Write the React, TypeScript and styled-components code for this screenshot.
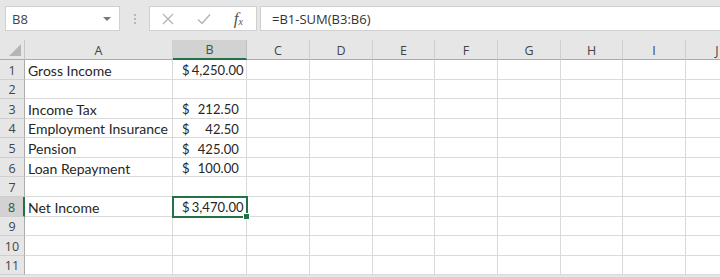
import styled, { createGlobalStyle } from "styled-components";

const GlobalStyle = createGlobalStyle`
	html, body {
		margin: 0;
		padding: 0;
		background: #e6e6e6;
	}
`;

type Row = {
	label?: string;
	amount?: string;
};

const rows: Row[] = [
	{ label: "Gross Income", amount: "4,250.00" },
	{},
	{ label: "Income Tax", amount: "212.50" },
	{ label: "Employment Insurance", amount: "42.50" },
	{ label: "Pension", amount: "425.00" },
	{ label: "Loan Repayment", amount: "100.00" },
	{},
	{ label: "Net Income", amount: "3,470.00" },
	{},
	{},
	{},
];

const extraCols = ["C", "D", "E", "F", "G", "H", "I", "J"];
const SELECTED_ROW = 8;

export default function App() {
	return (
		<Window>
			<GlobalStyle />
			<FormulaBar>
				<NameBox>
					<span>B8</span>
					<DropArrow />
				</NameBox>
				<Grip>
					<Dot />
					<Dot />
					<Dot />
				</Grip>
				<FxBox>
					<svg width="12" height="12" viewBox="0 0 12 12">
						<path d="M1 1 L11 11 M11 1 L1 11" stroke="#b3b3b3" strokeWidth="1.3" fill="none" />
					</svg>
					<svg width="14" height="12" viewBox="0 0 14 12">
						<path d="M1 6.5 L5 10.5 L13 1.5" stroke="#b3b3b3" strokeWidth="1.4" fill="none" />
					</svg>
					<Fx>
						<i>f</i>
						<sub>x</sub>
					</Fx>
				</FxBox>
				<Formula>=B1-SUM(B3:B6)</Formula>
			</FormulaBar>

			<Sheet>
				<Corner>
					<svg width="12" height="12" viewBox="0 0 12 12">
						<path d="M12 0 L12 12 L0 12 Z" fill="#b5b5b5" />
					</svg>
				</Corner>
				<ColHeader>A</ColHeader>
				<ColHeader $selected>B</ColHeader>
				{extraCols.map((c) => (
					<ColHeader key={c}>{c}</ColHeader>
				))}

				{rows.map((row, i) => {
					const n = i + 1;
					const selected = n === SELECTED_ROW;
					return [
						<RowHeader key={`h${n}`} $selected={selected}>
							{n}
						</RowHeader>,
						<Cell key={`a${n}`}>{row.label}</Cell>,
						<MoneyCell key={`b${n}`} $active={selected}>
							{row.amount && (
								<>
									<span>$</span>
									<span>{row.amount}</span>
								</>
							)}
							{selected && <FillHandle />}
						</MoneyCell>,
						...extraCols.map((c) => <Cell key={`${c}${n}`} />),
					];
				})}
			</Sheet>
		</Window>
	);
}

const Window = styled.div`
	width: 720px;
	height: 277px;
	overflow: hidden;
	background: #e6e6e6;
	font-family: "Open Sans", "Liberation Sans", sans-serif;
`;

const FormulaBar = styled.div`
	height: 40px;
	box-sizing: border-box;
	padding: 6px 0 0 5px;
	display: flex;
	align-items: flex-start;
`;

const NameBox = styled.div`
	width: 115px;
	height: 25px;
	box-sizing: border-box;
	background: #fff;
	border: 1px solid #d0d0d0;
	display: flex;
	align-items: center;
	justify-content: space-between;
	padding: 0 8px 0 6px;
	font-size: 13px;
	color: #444;
`;

const DropArrow = styled.div`
	width: 0;
	height: 0;
	border-left: 4px solid transparent;
	border-right: 4px solid transparent;
	border-top: 4px solid #777;
`;

const Grip = styled.div`
	width: 29px;
	height: 25px;
	display: flex;
	flex-direction: column;
	align-items: center;
	justify-content: center;
	gap: 2px;
`;

const Dot = styled.div`
	width: 2px;
	height: 2px;
	background: #b8b8b8;
`;

const FxBox = styled.div`
	width: 108px;
	height: 25px;
	box-sizing: border-box;
	background: #fff;
	border: 1px solid #d0d0d0;
	display: flex;
	align-items: center;
	justify-content: space-between;
	padding: 0 13px 0 12px;
`;

const Fx = styled.span`
	font-family: "Liberation Serif", "DejaVu Serif", serif;
	font-size: 17px;
	color: #555;
	i {
		font-style: italic;
	}
	sub {
		font-size: 10px;
		font-style: italic;
		vertical-align: -1px;
	}
`;

const Formula = styled.div`
	flex: 1;
	height: 25px;
	margin-left: 3px;
	box-sizing: border-box;
	background: #fff;
	border: 1px solid #d0d0d0;
	border-right: none;
	padding: 0 0 0 11px;
	display: flex;
	align-items: center;
	font-size: 13px;
	color: #333;
`;

const Sheet = styled.div`
	display: grid;
	grid-template-columns: 25px 148px 74px 63px 63px 62px 63px 63px 62px 63px 63px;
	grid-template-rows: 20px repeat(11, 19.57px);
	width: 749px;
	background: #fff;
`;

const Corner = styled.div`
	background: #e6e6e6;
	border-right: 1px solid #c6c6c6;
	border-bottom: 1px solid #ababab;
	box-sizing: border-box;
	display: flex;
	align-items: flex-end;
	justify-content: flex-end;
	padding: 0 3px 3px 0;
`;

const ColHeader = styled.div<{ $selected?: boolean }>`
	box-sizing: border-box;
	background: ${(p) => (p.$selected ? "#d2d2d2" : "#e6e6e6")};
	border-right: 1px solid ${(p) => (p.$selected ? "#c0c0c0" : "#cfcfcf")};
	border-bottom: ${(p) => (p.$selected ? "2px solid #217346" : "1px solid #ababab")};
	display: flex;
	align-items: center;
	justify-content: center;
	padding-top: 1px;
	font-size: 12.5px;
	color: ${(p) => (p.$selected ? "#2f5a3d" : "#444")};
`;

const RowHeader = styled.div<{ $selected?: boolean }>`
	box-sizing: border-box;
	background: ${(p) => (p.$selected ? "#d2d2d2" : "#e6e6e6")};
	border-right: ${(p) => (p.$selected ? "2px solid #217346" : "1px solid #ababab")};
	border-bottom: 1px solid #cfcfcf;
	display: flex;
	align-items: center;
	justify-content: center;
	padding-top: 2px;
	font-size: 12.5px;
	color: ${(p) => (p.$selected ? "#2f5a3d" : "#444")};
`;

const Cell = styled.div`
	box-sizing: border-box;
	border-right: 1px solid #dadada;
	border-bottom: 1px solid #dadada;
	display: flex;
	align-items: center;
	padding: 2px 0 0 3px;
	font-family: "Lato", "Open Sans", sans-serif;
	font-size: 14px;
	color: #262626;
	white-space: nowrap;
	overflow: hidden;
`;

const MoneyCell = styled(Cell)<{ $active?: boolean }>`
	position: relative;
	overflow: visible;
	justify-content: space-between;
	gap: 2px;
	padding: 2px 7px 0 9px;
	font-size: 13px;
	letter-spacing: 0.1px;
	${(p) =>
		p.$active &&
		`
		outline: 2px solid #217346;
		outline-offset: -1px;
		z-index: 1;
	`}
`;

const FillHandle = styled.div`
	position: absolute;
	right: -4px;
	bottom: -4px;
	width: 5px;
	height: 5px;
	background: #217346;
	border: 1px solid #fff;
`;
